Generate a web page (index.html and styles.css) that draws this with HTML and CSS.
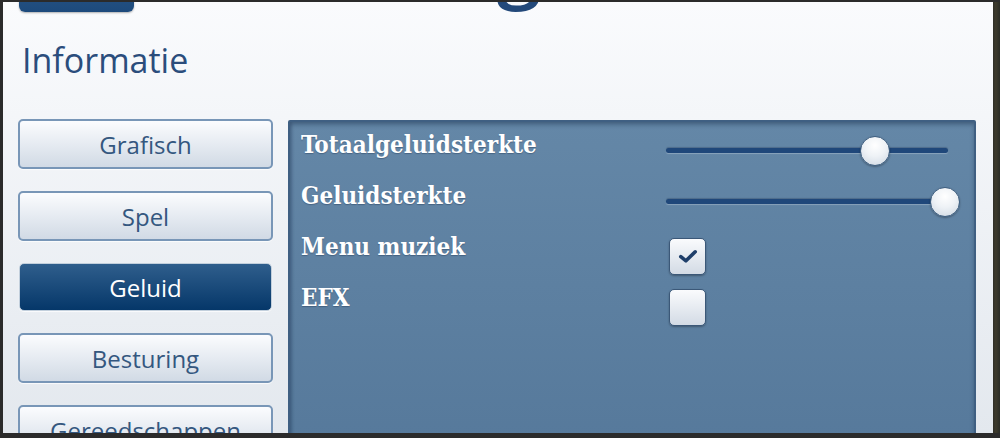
FILE: index.html
```html
<!DOCTYPE html>
<html lang="nl">
<head>
<meta charset="utf-8">
<title>Instellingen</title>
<link rel="stylesheet" href="styles.css">
</head>
<body>
<div class="frame">
  <div class="window">
    <header class="topbar">
      <div class="topbtn"></div>
      <div class="title">Instellingen</div>
    </header>
    <h1 class="heading">Informatie</h1>
    <div class="content">
      <nav class="menu">
        <div class="mbtn">Grafisch</div>
        <div class="mbtn">Spel</div>
        <div class="mbtn active">Geluid</div>
        <div class="mbtn">Besturing</div>
        <div class="mbtn">Gereedschappen</div>
      </nav>
      <section class="panel">
        <div class="row">
          <div class="label">Totaalgeluidsterkte</div>
          <div class="slider"><div class="track"></div><div class="knob" style="left: 74%"></div></div>
        </div>
        <div class="row">
          <div class="label">Geluidsterkte</div>
          <div class="slider"><div class="track"></div><div class="knob" style="left: 99%"></div></div>
        </div>
        <div class="row">
          <div class="label">Menu muziek</div>
          <div class="check checked">
            <svg viewBox="0 0 20 20" width="24" height="24"><path d="M4 10.5 L8.3 14 L16 6.5" fill="none" stroke="#1f3f6a" stroke-width="3" stroke-linecap="round" stroke-linejoin="round"/></svg>
          </div>
        </div>
        <div class="row">
          <div class="label">EFX</div>
          <div class="check"></div>
        </div>
      </section>
    </div>
  </div>
  <div class="scenery"></div>
</div>
</body>
</html>
```
FILE: styles.css
```css
html, body {
  margin: 0;
  padding: 0;
}
body {
  width: 1000px;
  height: 438px;
  overflow: hidden;
  background: #2b2b2b;
}
.frame {
  display: flex;
  height: 438px;
  padding: 2px 0 0 3px;
  box-sizing: border-box;
}
.window {
  width: 990px;
  height: 431px;
  overflow: hidden;
  background: linear-gradient(#fafbfd, #e3e8ee);
  display: flex;
  flex-direction: column;
  font-family: "Open Sans", "DejaVu Sans", sans-serif;
}
.scenery {
  flex: 1;
  height: 431px;
  background: linear-gradient(90deg, #2f2f28, #3d3a2c 40%, #2a2c26);
}
.topbar {
  height: 10px;
  display: flex;
  align-items: flex-end;
}
.topbtn {
  margin-left: 16px;
  width: 115px;
  height: 40px;
  margin-top: -30px;
  border-radius: 0 0 6px 6px;
  background: linear-gradient(#2e5a8a, #1d4a7c);
  box-shadow: 0 1px 2px rgba(0,0,0,0.3);
  align-self: flex-start;
}
.title {
  margin-left: 53px;
  margin-top: -80px;
  font-size: 80px;
  line-height: 80px;
  color: #23497a;
  font-weight: 600;
  align-self: flex-start;
  white-space: nowrap;
}
.heading {
  margin: 28px 0 0 19px;
  font-size: 34px;
  line-height: 40px;
  font-weight: 400;
  color: #2b4d7c;
}
.content {
  display: flex;
  gap: 15px;
  margin-top: 39px;
  padding-left: 15px;
}
.menu {
  width: 255px;
  display: flex;
  flex-direction: column;
  gap: 22px;
}
.mbtn {
  height: 46px;
  border: 2px solid #7896b7;
  border-radius: 5px;
  background: linear-gradient(#fbfcfe, #d1dae5);
  color: #34577f;
  font-size: 24px;
  display: flex;
  align-items: center;
  justify-content: center;
  box-shadow: 0 1px 1px rgba(255,255,255,0.8);
}
.mbtn.active {
  width: 251px;
  margin-left: 1px;
  border: 1px solid #c2cfdc;
  height: 46px;
  background: linear-gradient(#2f5e8c, #053769);
  color: #ffffff;
}
.panel {
  width: 688px;
  height: 330px;
  box-sizing: border-box;
  margin-top: 1px;
  border: 2px solid #3f5f82;
  border-radius: 2px;
  background: linear-gradient(#6487a7, #56799b);
  box-shadow: inset 0 3px 4px rgba(20,40,70,0.35), inset 2px 0 3px rgba(20,40,70,0.2);
  padding: 0 0 0 11px;
  display: grid;
  grid-template-columns: 365px 282px;
  grid-auto-rows: 51px;
  align-content: start;
}
.row {
  display: contents;
}
.label {
  font-family: "DejaVu Serif Condensed", "DejaVu Serif", serif;
  font-weight: bold;
  font-size: 24px;
  color: #ffffff;
  text-shadow: 0 1px 1px rgba(20,40,70,0.35);
  display: flex;
  align-items: center;
  padding-bottom: 6px;
}
.slider {
  position: relative;
  align-self: center;
  height: 30px;
  margin-top: 6px;
}
.track {
  position: absolute;
  left: 0;
  right: 0;
  top: 12px;
  height: 5px;
  border-radius: 3px;
  background: #1f477a;
  box-shadow: 0 1px 1px rgba(255,255,255,0.25), 0 -1px 1px rgba(30,50,80,0.3);
}
.knob {
  position: absolute;
  top: 0;
  width: 28px;
  height: 28px;
  margin-left: -15px;
  border-radius: 50%;
  border: 1px solid #3f5f80;
  background: radial-gradient(circle at 50% 30%, #ffffff 0%, #eef2f6 45%, #cdd7e2 100%);
  box-shadow: 0 1px 2px rgba(0,0,0,0.3);
}
.check {
  align-self: center;
  margin-top: 13px;
  margin-left: 3px;
  width: 35px;
  height: 35px;
  border: 1px solid #3b5878;
  border-radius: 5px;
  background: linear-gradient(#fafbfd, #d3dbe5);
  box-shadow: 0 1px 2px rgba(0,0,0,0.3);
  display: flex;
  align-items: center;
  justify-content: center;
}
```
